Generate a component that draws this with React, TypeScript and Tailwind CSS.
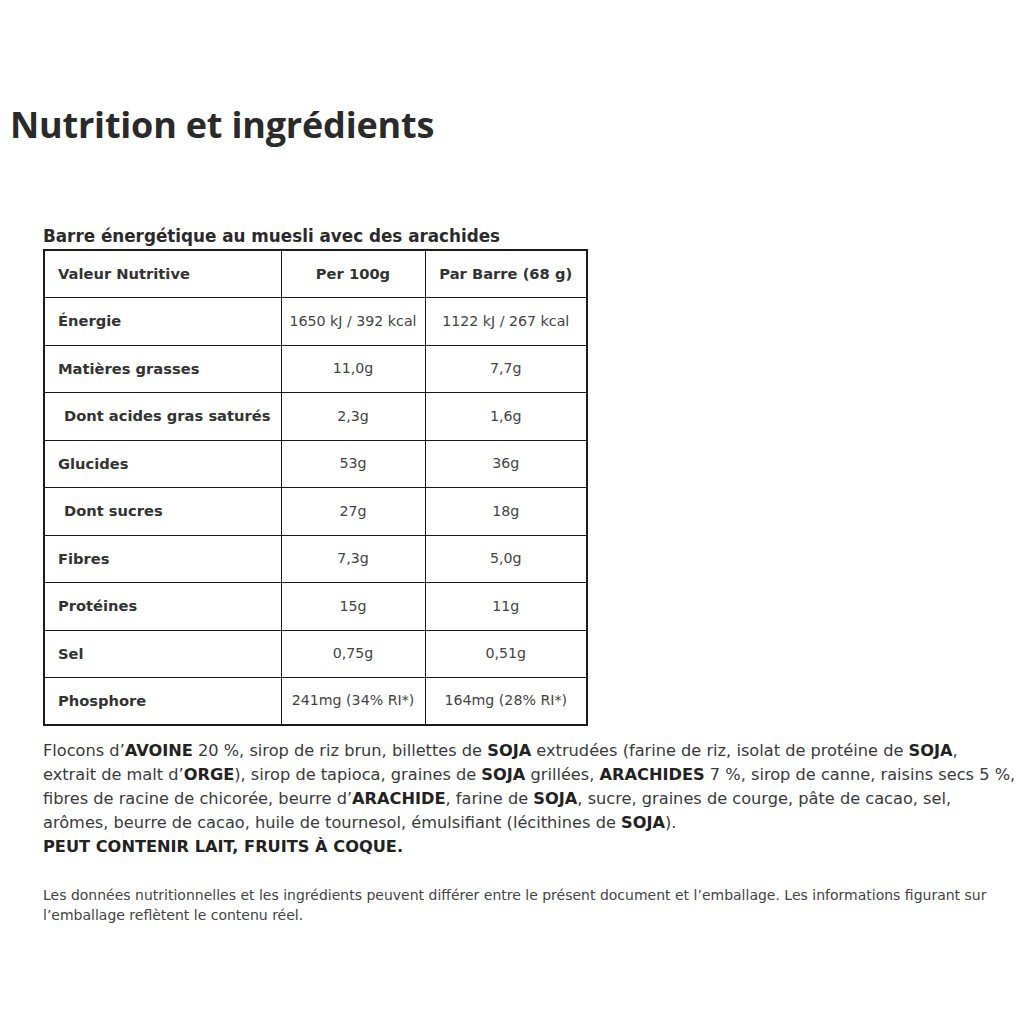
const rows: { label: string; a: string; b: string; indent?: boolean }[] = [
  { label: 'Énergie', a: '1650 kJ / 392 kcal', b: '1122 kJ / 267 kcal' },
  { label: 'Matières grasses', a: '11,0g', b: '7,7g' },
  { label: 'Dont acides gras saturés', a: '2,3g', b: '1,6g', indent: true },
  { label: 'Glucides', a: '53g', b: '36g' },
  { label: 'Dont sucres', a: '27g', b: '18g', indent: true },
  { label: 'Fibres', a: '7,3g', b: '5,0g' },
  { label: 'Protéines', a: '15g', b: '11g' },
  { label: 'Sel', a: '0,75g', b: '0,51g' },
  { label: 'Phosphore', a: '241mg (34% RI*)', b: '164mg (28% RI*)' },
];

function B({ children }: { children: React.ReactNode }) {
  return <strong className="font-bold text-[#222]">{children}</strong>;
}

export default function App() {
  return (
    <div className="min-h-[1024px] w-[1024px] bg-white font-['DejaVu_Sans',sans-serif] text-[#333]">
      <h1 className="px-[10px] pt-[99px] font-['Open_Sans',sans-serif] text-[36px] font-bold leading-[52px] tracking-[-0.2px] text-[#2a2a2a]">
        Nutrition et ingrédients
      </h1>

      <div className="px-[43px] pt-[73px]">
        <h2 className="text-[16.8px] font-bold leading-[25px] text-[#2a2a2a]">
          Barre énergétique au muesli avec des arachides
        </h2>

        <table className="w-[543px] table-fixed border-collapse border-2 border-[#1a1a1a]">
          <colgroup>
            <col className="w-[237px]" />
            <col className="w-[144px]" />
            <col className="w-[162px]" />
          </colgroup>
          <thead>
            <tr className="h-[47.5px]">
              <th className="border border-[#1a1a1a] px-[13px] text-left text-[14.7px] font-bold">Valeur Nutritive</th>
              <th className="border border-[#1a1a1a] text-center text-[14.7px] font-bold">Per 100g</th>
              <th className="border border-[#1a1a1a] text-center text-[14.7px] font-bold">Par Barre (68 g)</th>
            </tr>
          </thead>
          <tbody>
            {rows.map((r) => (
              <tr key={r.label} className="h-[47.5px]">
                <td
                  className={
                    r.indent
                      ? 'border border-[#1a1a1a] pl-[19px] text-[14.7px] font-bold'
                      : 'border border-[#1a1a1a] pl-[13px] text-[14.7px] font-bold'
                  }
                >
                  {r.label}
                </td>
                <td className="border border-[#1a1a1a] text-center text-[14.2px] text-[#444]">{r.a}</td>
                <td className="border border-[#1a1a1a] text-center text-[14.2px] text-[#444]">{r.b}</td>
              </tr>
            ))}
          </tbody>
        </table>

        <p className="mt-[13px] whitespace-nowrap text-[16.2px] leading-[24px] text-[#3a3a3a]">
          Flocons d’<B>AVOINE</B> 20 %, sirop de riz brun, billettes de <B>SOJA</B> extrudées (farine de riz, isolat
          de protéine de <B>SOJA</B>,
          <br />
          extrait de malt d’<B>ORGE</B>), sirop de tapioca, graines de <B>SOJA</B> grillées, <B>ARACHIDES</B> 7 %,
          sirop de canne, raisins secs 5 %,
          <br />
          fibres de racine de chicorée, beurre d’<B>ARACHIDE</B>, farine de <B>SOJA</B>, sucre, graines de courge,
          pâte de cacao, sel,
          <br />
          arômes, beurre de cacao, huile de tournesol, émulsifiant (lécithines de <B>SOJA</B>).
          <br />
          <B>PEUT CONTENIR LAIT, FRUITS À COQUE.</B>
        </p>

        <p className="mt-[26px] whitespace-nowrap text-[14px] leading-[20px] text-[#444]">
          Les données nutritionnelles et les ingrédients peuvent différer entre le présent document et l’emballage.
          Les informations figurant sur
          <br />
          l’emballage reflètent le contenu réel.
        </p>
      </div>
    </div>
  );
}
